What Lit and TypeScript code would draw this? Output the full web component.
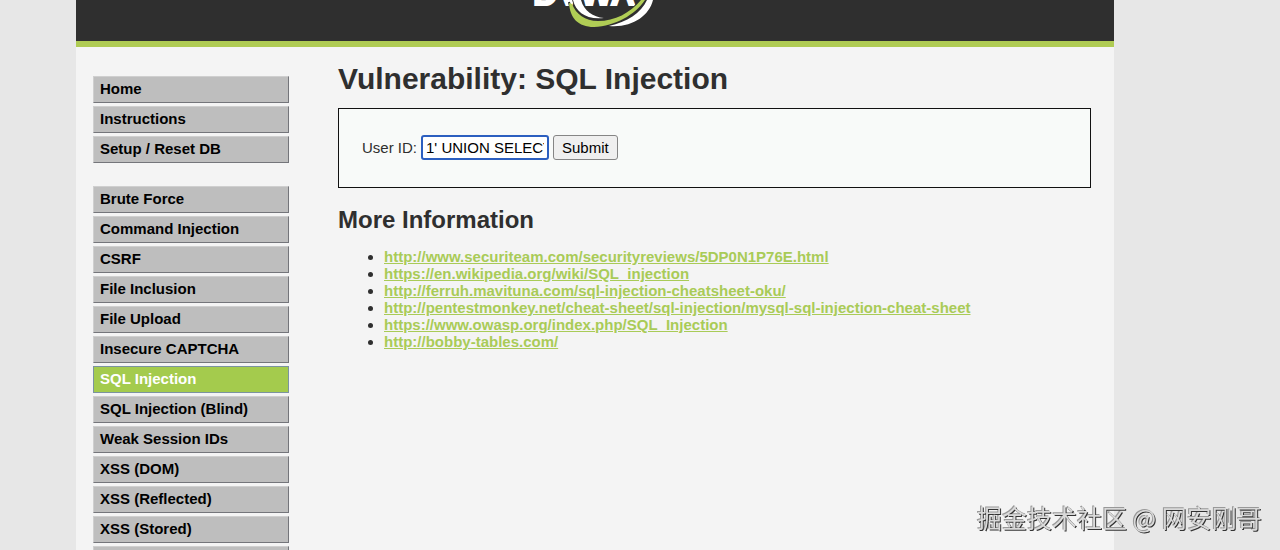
import { LitElement, html, css } from "lit";
import { customElement } from "lit/decorators.js";
import { classMap } from "lit/directives/class-map.js";

const MENU: string[][] = [
  ["Home", "Instructions", "Setup / Reset DB"],
  [
    "Brute Force", "Command Injection", "CSRF", "File Inclusion", "File Upload",
    "Insecure CAPTCHA", "SQL Injection", "SQL Injection (Blind)",
    "Weak Session IDs", "XSS (DOM)", "XSS (Reflected)", "XSS (Stored)", "CSP Bypass",
  ],
];

const LINKS: string[] = [
  "http://www.securiteam.com/securityreviews/5DP0N1P76E.html",
  "https://en.wikipedia.org/wiki/SQL_injection",
  "http://ferruh.mavituna.com/sql-injection-cheatsheet-oku/",
  "http://pentestmonkey.net/cheat-sheet/sql-injection/mysql-sql-injection-cheat-sheet",
  "https://www.owasp.org/index.php/SQL_Injection",
  "http://bobby-tables.com/",
];

@customElement("app-root")
export class AppRoot extends LitElement {
  static styles = css`
    :host {
      display: block;
      height: 100vh;
      overflow: hidden;
      background: #e7e7e7;
      color: #2f2f2f;
      font: 15px/17px "Liberation Sans", Arial, sans-serif;
    }
    .page {
      min-height: 100vh;
      margin: 0 166px 0 76px;
      background: #f4f4f4;
    }
    .header {
      display: flex;
      justify-content: center;
      height: 41px;
      background: #2f2f2f;
      border-bottom: 6px solid #afcb53;
    }
    .logo { display: block; width: 130px; height: 30px; }
    .name {
      font: bold 34px "Liberation Sans", Arial, sans-serif;
      fill: #fff;
      stroke: #fff;
      stroke-width: 2px;
    }
    .green { fill: #b0cd55; }
    .white { fill: #fff; }
    .gap { fill: none; stroke: #2f2f2f; stroke-width: 2px; }
    .body { display: flex; }
    .menu {
      flex: none;
      display: flex;
      flex-direction: column;
      gap: 23px;
      width: 196px;
      padding: 29px 49px 0 17px;
    }
    .group {
      display: grid;
      gap: 3px;
      margin: 0;
      padding: 0;
      list-style: none;
    }
    .item {
      display: block;
      box-sizing: border-box;
      height: 27px;
      padding: 3px 6px;
      border: 1px solid;
      border-color: #cfcfcf #74757a #74757a #cfcfcf;
      background: #bebebe;
      color: #000;
      font-weight: bold;
      text-decoration: none;
    }
    .item.selected {
      background: #a4cb4d;
      border-color: #7b93a0;
      color: #fff;
    }
    .main { flex: 1; min-width: 0; padding: 14px 23px 0 0; }
    h1 { margin: 0 0 12px; font-size: 30px; line-height: 35px; }
    h2 { margin: 18px 0 14px; font-size: 24px; line-height: 28px; }
    .panel {
      box-sizing: border-box;
      height: 80px;
      padding: 26px 23px;
      border: 1px solid #111;
      background: #f8faf9;
    }
    .form { display: flex; align-items: center; gap: 4px; }
    .form label { line-height: 25px; }
    .field {
      box-sizing: border-box;
      width: 128px;
      height: 25px;
      padding: 0 3px;
      border: 2px solid #2c5fc0;
      border-radius: 3px;
      outline: none;
      background: #fff;
      color: #000;
      font: inherit;
    }
    .submit {
      box-sizing: border-box;
      height: 25px;
      padding: 0 8px;
      border: 1px solid #858585;
      border-radius: 3px;
      background: #efefef;
      color: #000;
      font: inherit;
    }
    .links { margin: 0; padding: 0 0 0 46px; }
    .links a { color: #a9cb57; font-weight: bold; }
    .watermark {
      position: absolute;
      right: 18px;
      bottom: 16px;
      color: #d9d9d9;
      font: 25px/34px "Noto Sans CJK SC", sans-serif;
      text-shadow: 1px 1px 0 #333, -1px -1px 0 #999;
      will-change: transform;
    }
  `;

  render() {
    return html`
      <div class="page">
        <header class="header">
          <svg class="logo" viewBox="530 0 130 30" role="img" aria-label="DVWA">
            <text class="name" x="533" y="5">DVWA</text>
            <path class="gap" d="M569 2C571 15 579 24 594 24M573 0C577 13 587 20 604 19M640 0C636 6 631 11 625 15" />
            <path class="green" d="M569 3C570 18 578 27 594 27C615 26 635 15 645 0H641C630 13 615 21 598 21C585 21 576 14 572 4Z" />
            <path class="white" d="M573 0C576 12 586 20 604 18C593 17 584 11 581 0Z" />
            <path class="white" d="M653 0C649 16 632 28 609 26C627 22 641 13 647 0Z" />
          </svg>
        </header>
        <div class="body">
          <nav class="menu">
            ${MENU.map((group) => html`
              <ul class="group">
                ${group.map((name) => html`<li>
                  <a href="#" class=${classMap({ item: true, selected: name === "SQL Injection" })}>${name}</a>
                </li>`)}
              </ul>`)}
          </nav>
          <main class="main">
            <h1>Vulnerability: SQL Injection</h1>
            <div class="panel">
              <form class="form">
                <label for="uid">User ID:</label>
                <input class="field" id="uid" type="text" value="1' UNION SELECT" />
                <button class="submit" type="button">Submit</button>
              </form>
            </div>
            <h2>More Information</h2>
            <ul class="links">
              ${LINKS.map((url) => html`<li><a href=${url}>${url}</a></li>`)}
            </ul>
          </main>
        </div>
      </div>
      <div class="watermark">掘金技术社区 @ 网安刚哥</div>
    `;
  }
}
